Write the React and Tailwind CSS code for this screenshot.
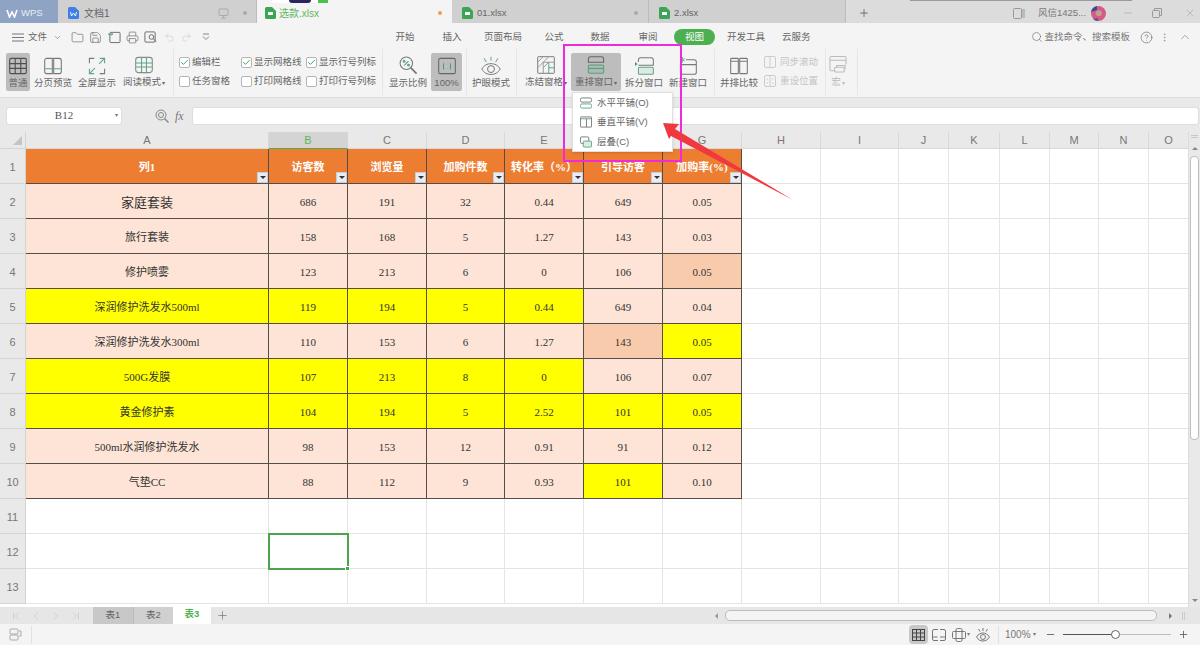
import React from "react";
import { Search, HelpCircle, ChevronUp, ChevronDown, MoreVertical, Plus, Minus, X, Undo2, Redo2, Folder, Save, Printer, ChevronLeft, ChevronRight, ChevronFirst, ChevronLast, Check } from "lucide-react";

const FONT = "font-['Liberation_Sans','Noto_Sans_CJK_SC',sans-serif]";
const CELL_FONT = "font-['Liberation_Serif','Noto_Sans_CJK_SC',serif]";

const colWidths = [243, 79, 79, 78, 79, 79, 79, 79, 78, 50, 51, 50, 49, 50, 40];
const colLabels = ["A", "B", "C", "D", "E", "F", "G", "H", "I", "J", "K", "L", "M", "N", "O"];

const headers = ["列1", "访客数", "浏览量", "加购件数", "转化率（%）", "引导访客", "加购率(%)"];
const rows = [
  { cells: ["家庭套装", "686", "191", "32", "0.44", "649", "0.05"] },
  { cells: ["旅行套装", "158", "168", "5", "1.27", "143", "0.03"] },
  { cells: ["修护喷雾", "123", "213", "6", "0", "106", "0.05"], dark: [6] },
  { cells: ["深润修护洗发水500ml", "119", "194", "5", "0.44", "649", "0.04"], yellow: [0, 1, 2, 3, 4] },
  { cells: ["深润修护洗发水300ml", "110", "153", "6", "1.27", "143", "0.05"], dark: [5], yellow: [6] },
  { cells: ["500G发膜", "107", "213", "8", "0", "106", "0.07"], yellow: [0, 1, 2, 3, 4] },
  { cells: ["黄金修护素", "104", "194", "5", "2.52", "101", "0.05"], yellow: [0, 1, 2, 3, 4, 5, 6] },
  { cells: ["500ml水润修护洗发水", "98", "153", "12", "0.91", "91", "0.12"] },
  { cells: ["气垫CC", "88", "112", "9", "0.93", "101", "0.10"], yellow: [5] },
];

const GridIcon = () => (
  <svg width="18" height="18" viewBox="0 0 26 26" fill="none" stroke="#4f4f4f" strokeWidth="1.6">
    <rect x="1" y="2" width="24" height="22" rx="2" />
    <path d="M1 9.500h24M1 16.500h24M9 2v22M17 2v22" />
  </svg>
);

const PageIcon = () => (
  <svg width="18" height="18" viewBox="0 0 26 26" fill="none" strokeWidth="1.5">
    <path d="M12 2H4a3 3 0 0 0-3 3v16a3 3 0 0 0 3 3h8V2zM14 2h8a3 3 0 0 1 3 3v16a3 3 0 0 1-3 3h-8V2z" stroke="#777" />
    <path d="M1 17h11M14 17h11" stroke="#5fa584" />
  </svg>
);

const FullIcon = () => (
  <svg width="18" height="18" viewBox="0 0 26 26" fill="none" strokeWidth="1.5">
    <path d="M2 9V2h7M24 17v7h-7" stroke="#777" />
    <path d="M17 2h7v7M24 2l-8 8M9 24H2v-7M2 24l8-8" stroke="#5fa584" />
  </svg>
);

const ReadIcon = () => (
  <svg width="18" height="18" viewBox="0 0 26 26" fill="none" strokeWidth="1.5" stroke="#5fa584">
    <rect x="1" y="2" width="24" height="22" rx="4" stroke="#888" />
    <path d="M1 10h24M1 16h24M9.500 2v22M16.500 2v22" />
  </svg>
);

const ZoomPctIcon = () => (
  <svg width="19" height="19" viewBox="0 0 26 26" fill="none" stroke="#777" strokeWidth="1.4">
    <circle cx="10" cy="10" r="8.500" />
    <path d="M16 16l8 8" strokeWidth="2.400" />
    <path d="M7 13l6-6" stroke="#4c9a76" />
    <circle cx="7" cy="7.500" r="1.200" stroke="#4c9a76" />
    <circle cx="13" cy="12.500" r="1.200" stroke="#4c9a76" />
  </svg>
);

const RatioIcon = () => (
  <svg width="18" height="18" viewBox="0 0 26 26" fill="none" stroke="#666" strokeWidth="1.5">
    <rect x="1" y="2" width="24" height="22" rx="2" />
    <path d="M8 9v9M13 10.500v.5M13 16v.5M18 9v9" stroke="#4c9a76" />
  </svg>
);

const EyeIcon = () => (
  <svg width="20" height="20" viewBox="0 0 26 26" fill="none" stroke="#777" strokeWidth="1.3">
    <path d="M1 17c3-5 7-7 12-7s9 2 12 7c-3 5-7 7-12 7s-9-2-12-7z" />
    <circle cx="13" cy="17" r="4.500" />
    <path d="M13 1v5M4 3l3 5M22 3l-3 5" stroke="#5fa584" />
  </svg>
);

const FreezeIcon = () => (
  <svg width="18" height="18" viewBox="0 0 26 26" fill="none" strokeWidth="1.4">
    <rect x="1" y="1" width="24" height="24" rx="1" stroke="#777" />
    <path d="M1 9l8-8M1 17L17 1M9 17l8-8M9 25V9h16" stroke="#999" />
    <path d="M17 9v16M17 17h8" stroke="#5fa584" />
  </svg>
);

const ArrangeIcon = () => (
  <svg width="18" height="18" viewBox="0 0 26 26" fill="none" strokeWidth="1.5">
    <path d="M2 9V4a3 3 0 0 1 3-3h16a3 3 0 0 1 3 3v5M1 9h24" stroke="#666" />
    <rect x="2" y="13" width="22" height="12" rx="2" stroke="#5c9a7d" fill="#a8bdb1" />
    <path d="M2 18h22" stroke="#5c9a7d" />
  </svg>
);

const SplitIcon = () => (
  <svg width="19" height="18" viewBox="0 0 28 26" fill="none" strokeWidth="1.500">
    <path d="M5 7V4a3 3 0 0 1 3-3h16a3 3 0 0 1 3 3v8H5" stroke="#777" />
    <rect x="5" y="15" width="22" height="10" rx="1.500" stroke="#5fa584" fill="#dcebe3" />
    <path d="M0 7l4 3-4 3z" fill="#4c9a76" />
  </svg>
);

const NewWinIcon = () => (
  <svg width="18" height="18" viewBox="0 0 26 26" fill="none" strokeWidth="1.500" stroke="#777">
    <path d="M10 4h12a3 3 0 0 1 3 3v15a3 3 0 0 1-3 3H5a3 3 0 0 1-3-3V11M2 11h23" />
    <path d="M5 0v8M1.500 2l7 4M8.500 2l-7 4" stroke="#5fa584" strokeWidth="1.200" />
  </svg>
);

const CompareIcon = () => (
  <svg width="18" height="18" viewBox="0 0 26 26" fill="none" strokeWidth="1.500" stroke="#777">
    <rect x="1" y="2" width="11" height="22" rx="1" />
    <rect x="14" y="2" width="11" height="22" rx="1" />
    <path d="M1 6h11M14 6h11" />
  </svg>
);

const MacroIcon = () => (
  <svg width="19" height="19" viewBox="0 0 20 20" fill="none" stroke="#bbb" strokeWidth="1.100">
    <path d="M18 10V3a1.500 1.500 0 0 0-1.500-1.500h-14A1.500 1.500 0 0 0 1 3v12a1.500 1.500 0 0 0 1.500 1.500H6M1 5.500h17" />
    <rect x="6" y="13" width="10" height="5" rx="1" />
    <path d="M8 13v-2h9v4" />
  </svg>
);

const RibbonBtn = ({ icon, label, active, caret, className = "" }) => (
  <div className={`flex flex-col items-center justify-between h-[38px] pb-[2px] rounded-[2px] ${active ? "bg-[#bdbdbd]" : ""} ${className}`}>
    <div className="flex items-center justify-center h-[24px] pt-[2px]">{icon}</div>
    <div className="text-[9.5px] leading-[12px] text-[#666] whitespace-nowrap">
      {label}
      {caret && <span className="text-[6px] ml-px align-middle">▾</span>}
    </div>
  </div>
);

const Divider = () => <div className="w-px h-[46px] bg-[#e6e6e6] shrink-0" />;

const CheckItem = ({ label, checked }) => (
  <div className="flex items-center gap-[2px] h-[19px]">
    <span className="flex items-center justify-center w-[11px] h-[11px] bg-white border border-[#b4b4b4] rounded-[2px]">
      {checked && <Check size={9} strokeWidth={2.5} className="text-[#3f9a6b]" />}
    </span>
    <span className="text-[9.5px] text-[#666] whitespace-nowrap">{label}</span>
  </div>
);

const SheetFileIcon = () => (
  <svg width="11" height="12" viewBox="0 0 11 12">
    <path d="M1.500 0H7l4 4v6.500a1.500 1.500 0 0 1-1.500 1.500h-8A1.500 1.500 0 0 1 0 10.500v-9A1.500 1.500 0 0 1 1.500 0z" fill="#3aa655" />
    <rect x="3" y="5" width="5" height="3" fill="#fff" />
  </svg>
);

const WordFileIcon = () => (
  <svg width="11" height="12" viewBox="0 0 11 12">
    <path d="M1.500 0H7l4 4v6.500a1.500 1.500 0 0 1-1.500 1.500h-8A1.500 1.500 0 0 1 0 10.500v-9A1.500 1.500 0 0 1 1.500 0z" fill="#3f7fe6" />
    <path d="M2.500 5l1 4 2-3 2 3 1-4" fill="none" stroke="#fff" strokeWidth="0.900" />
  </svg>
);

const Avatar = () => (
  <svg width="15" height="15" viewBox="0 0 15 15" className="ml-[5px]">
    <circle cx="7.500" cy="7.500" r="7.500" fill="#d9578b" />
    <path d="M0 6a7.500 7.500 0 0 1 6-6v4z" fill="#2f4f8f" />
    <path d="M2 13a7.500 7.500 0 0 0 5 2v-3z" fill="#4a5f7a" />
    <circle cx="7.800" cy="7.200" r="3" fill="#b8a58a" />
  </svg>
);

const TabBar = () => (
  <div className="relative flex h-[23px] bg-[#d4d4d4] text-[9.5px] text-[#555] shrink-0">
    <div className="flex items-center w-[58px] pl-[6px] pt-[3px] gap-[3px] bg-[#8fa3c4] text-white/80">
      <svg width="12" height="9" viewBox="0 0 12 9" fill="none" stroke="#fff" strokeWidth="1.600">
        <path d="M1 1l2.500 7L6 3l2.500 5L11 1" />
      </svg>
      <span className="text-[9.5px]">WPS</span>
    </div>
    <div className="flex items-center w-[199px] pl-[10px] pt-[3px] gap-[5px] bg-[#d0d0d0] border-r border-[#bcbcbc]">
      <WordFileIcon />
      <span className="flex-1 text-[#666] text-[10px]">文档1</span>
      <svg width="11" height="11" viewBox="0 0 11 11" fill="none" stroke="#aaa">
        <rect x="1" y="1" width="9" height="6.500" rx="1" />
        <path d="M5.500 7.500V10M3 10h5" />
      </svg>
      <span className="w-[4px] h-[4px] rounded-full bg-[#aaa] mx-[9px]" />
    </div>
    <div className="flex items-center w-[195px] pl-[8px] pt-[3px] gap-[3px] bg-[#f4f4f4]">
      <SheetFileIcon />
      <span className="flex-1 text-[#5cb85c] text-[10px]">选款.xlsx</span>
      <span className="w-[4px] h-[4px] rounded-full bg-[#e9a04f] mr-[10px]" />
    </div>
    <div className="flex items-center w-[197px] pl-[10px] pt-[3px] gap-[4px] bg-[#d0d0d0] border-r border-[#bcbcbc]">
      <SheetFileIcon />
      <span className="flex-1 text-[#666]">01.xlsx</span>
      <span className="w-[4px] h-[4px] rounded-full bg-[#aaa] mr-[10px]" />
    </div>
    <div className="flex items-center w-[197px] pl-[10px] pt-[3px] gap-[4px] bg-[#d0d0d0] border-r border-[#bcbcbc]">
      <SheetFileIcon />
      <span className="flex-1 text-[#666]">2.xlsx</span>
    </div>
    <div className="flex-1 flex items-center bg-[#dcdcdc] pl-[12px] pt-[3px]">
      <Plus size={12} strokeWidth={1.500} className="text-[#555]" />
      <svg width="12" height="11" viewBox="0 0 12 11" fill="none" stroke="#999" className="ml-[143px]">
        <rect x="0.500" y="0.500" width="8" height="10" rx="1" />
        <rect x="9" y="1" width="3" height="9" fill="#bbb" stroke="none" />
      </svg>
      <span className="ml-[13px] text-[9.5px] text-[#777] whitespace-nowrap">风信1425...</span>
      <Avatar />
      <Minus size={12} strokeWidth={1} className="ml-[16px] text-[#999]" />
      <svg width="10" height="10" viewBox="0 0 10 10" fill="none" stroke="#999" className="ml-[18px]">
        <rect x="0.500" y="2.500" width="7" height="7" rx="1" />
        <path d="M2.500 2.500v-2h7v7h-2" />
      </svg>
      <X size={12} strokeWidth={1} className="ml-[22px] text-[#999]" />
    </div>
    {/* stray picture strip at the top edge */}
    <div className="absolute left-[272px] top-0 w-[56px] h-[3px] bg-white flex justify-center">
      <span className="w-[22px] h-[3px] bg-[#2a2560] rounded-b-full" />
      <span className="absolute right-0 w-[10px] h-[3px] bg-[#49c24c]" />
    </div>
    <div className="absolute left-[910px] top-0 w-[222px] h-px bg-[#9a9a9a]" />
  </div>
);

const NavItem = ({ children, className = "" }) => (
  <span className={`w-[40px] text-center ${className}`}>{children}</span>
);

const MenuRow = () => (
  <div className="flex items-center h-[26px] pt-[2px] bg-[#f4f4f4] text-[9.5px] text-[#666] shrink-0 whitespace-nowrap">
    <svg width="12" height="9" viewBox="0 0 12 9" stroke="#777" className="ml-[12px]">
      <path d="M0 1h12M0 4.500h12M0 8h12" />
    </svg>
    <span className="ml-[4px] w-[19px]">文件</span>
    <ChevronDown size={9} className="ml-[6px] text-[#888]" />
    <Folder size={13} strokeWidth={1.200} className="ml-[9px] text-[#666]" />
    <Save size={13} strokeWidth={1.200} className="ml-[5px] text-[#666]" />
    <svg width="13" height="14" viewBox="0 0 14 14" fill="none" stroke="#666" className="ml-[6px]">
      <rect x="2" y="2" width="11" height="11" rx="1" />
      <path d="M0 4h5M3.500 2.500L5 4 3.500 5.500" stroke="#4c9a76" />
    </svg>
    <Printer size={13} strokeWidth={1.200} className="ml-[5px] text-[#666]" />
    <svg width="13" height="14" viewBox="0 0 14 14" fill="none" stroke="#666" className="ml-[5px]">
      <rect x="1" y="1.500" width="11" height="11" rx="1" />
      <circle cx="8" cy="7" r="2.500" />
      <path d="M10 9l3 3" />
    </svg>
    <Undo2 size={11} strokeWidth={1.200} className="ml-[7px] text-[#c4c4c4]" />
    <Redo2 size={11} strokeWidth={1.200} className="ml-[6px] text-[#c4c4c4]" />
    <svg width="8" height="8" viewBox="0 0 8 8" fill="none" stroke="#888" className="ml-[10px]">
      <path d="M1 1h6M1 3.500l3 3 3-3" />
    </svg>
    <NavItem className="ml-[175px]">开始</NavItem>
    <NavItem className="ml-[7px]">插入</NavItem>
    <NavItem className="ml-[11px]">页面布局</NavItem>
    <NavItem className="ml-[11px]">公式</NavItem>
    <NavItem className="ml-[6px]">数据</NavItem>
    <NavItem className="ml-[8px]">审阅</NavItem>
    <span className="ml-[6px] flex items-center justify-center w-[41px] h-[16px] rounded-full bg-[#4caf50] text-white">视图</span>
    <span className="ml-[12px]">开发工具</span>
    <span className="ml-[17px]">云服务</span>
    <Search size={12} strokeWidth={1.200} className="ml-[220px] text-[#666]" />
    <span className="ml-[2px] text-[#777]">查找命令、搜索模板</span>
    <HelpCircle size={13} strokeWidth={1.200} className="ml-[10px] text-[#666]" />
    <MoreVertical size={11} strokeWidth={1.200} className="ml-[6px] text-[#888]" />
    <ChevronUp size={14} strokeWidth={1} className="ml-[8px] text-[#777]" />
  </div>
);

const Ribbon = () => (
  <div className="flex items-center h-[49px] bg-[#f4f4f4] pl-[6px] pb-[3px] border-b border-[#dcdcdc] shrink-0">
    <RibbonBtn active icon={<GridIcon />} label="普通" className="w-[24px]" />
    <RibbonBtn icon={<PageIcon />} label="分页预览" className="w-[44px] ml-px" />
    <RibbonBtn icon={<FullIcon />} label="全屏显示" className="w-[44px]" />
    <RibbonBtn caret icon={<ReadIcon />} label="阅读模式" className="w-[50px] mr-[4px]" />
    <Divider />
    <div className="ml-[5px] w-[62px]">
      <CheckItem checked label="编辑栏" />
      <CheckItem label="任务窗格" />
    </div>
    <div className="w-[65px]">
      <CheckItem checked label="显示网格线" />
      <CheckItem label="打印网格线" />
    </div>
    <div className="w-[76px]">
      <CheckItem checked label="显示行号列标" />
      <CheckItem label="打印行号列标" />
    </div>
    <Divider />
    <RibbonBtn icon={<ZoomPctIcon />} label="显示比例" className="w-[44px] ml-[3px]" />
    <RibbonBtn active icon={<RatioIcon />} label="100%" className="w-[31px] ml-px mr-[4px]" />
    <Divider />
    <RibbonBtn icon={<EyeIcon />} label="护眼模式" className="w-[44px] ml-[2px] mr-[3px]" />
    <Divider />
    <RibbonBtn caret icon={<FreezeIcon />} label="冻结窗格" className="w-[48px] ml-[5px]" />
    <RibbonBtn active caret icon={<ArrangeIcon />} label="重排窗口" className="w-[50px] ml-px" />
    <RibbonBtn icon={<SplitIcon />} label="拆分窗口" className="w-[44px] ml-px" />
    <RibbonBtn icon={<NewWinIcon />} label="新建窗口" className="w-[44px] mr-[4px]" />
    <Divider />
    <RibbonBtn icon={<CompareIcon />} label="并排比较" className="w-[44px] ml-[2px]" />
    <div className="ml-[3px] w-[61px] text-[9.5px] text-[#c4c4c4] whitespace-nowrap">
      <div className="flex items-center gap-[4px] h-[19px]">
        <svg width="12" height="12" viewBox="0 0 12 12" fill="none" stroke="#ccc">
          <rect x="0.500" y="0.500" width="11" height="11" rx="1.500" />
          <path d="M6 0.500v11" />
        </svg>
        同步滚动
      </div>
      <div className="flex items-center gap-[4px] h-[19px]">
        <svg width="12" height="12" viewBox="0 0 12 12" fill="none" stroke="#ccc">
          <rect x="0.500" y="0.500" width="11" height="11" rx="1.500" />
          <path d="M6 0.500v11M2.500 4h1.500M8 4h1.500M2.500 8h1.500M8 8h1.500" />
        </svg>
        重设位置
      </div>
    </div>
    <Divider />
    <div className="flex flex-col items-center w-[24px] mr-[7px] h-[38px] pt-[2px] pb-[2px] justify-between text-[9.5px] leading-[12px] text-[#bbb]">
      <MacroIcon />
      <span>宏<span className="text-[6px] ml-px">▾</span></span>
    </div>
    <Divider />
  </div>
);

const FormulaBar = () => (
  <div className="flex items-center h-[34px] pt-px bg-[#e9e9e9] pl-[6px] pr-px shrink-0">
    <div className="relative flex items-center justify-center w-[116px] h-[18px] bg-white rounded-[3px] border border-[#dedede]">
      <span className={`text-[11px] text-[#555] ${CELL_FONT}`}>B12</span>
      <span className="absolute right-[3px] text-[6px] text-[#777]">▾</span>
    </div>
    <svg width="14" height="14" viewBox="0 0 14 14" fill="none" stroke="#888" className="ml-[33px]">
      <circle cx="6" cy="6" r="5" />
      <circle cx="6" cy="6" r="2.500" />
      <path d="M9.500 9.500l4 4" strokeWidth="1.500" />
    </svg>
    <span className="ml-[6px] w-[11px] text-[12px] italic text-[#777] font-['Liberation_Serif',serif]">fx</span>
    <div className="ml-[6px] flex-1 h-[18px] bg-white rounded-[3px] border border-[#dedede]" />
  </div>
);

const RowLabel = ({ children }) => (
  <div className="flex items-center justify-center pt-[3px] bg-[#e9e9e9] border-r border-b border-[#d4d4d4] text-[11px] text-[#777]">
    {children}
  </div>
);

const DataRow = ({ index, row }) => (
  <>
    <RowLabel>{index}</RowLabel>
    {colWidths.map((_, c) => {
      if (c > 6 || !row) {
        return <div key={c} className="border-r border-b border-[#e4e4e4]" />;
      }
      const isYellow = row.yellow?.includes(c);
      const isDark = row.dark?.includes(c);
      return (
        <div
          key={c}
          className={`flex items-center justify-center pt-[3px] border-r border-b border-[#544d48] text-[#333] whitespace-nowrap ${CELL_FONT} ${
            index === 2 && c === 0 ? "text-[13px]" : "text-[11px]"
          } ${isYellow ? "bg-[#ffff00]" : isDark ? "bg-[#f8cbad]" : "bg-[#fde4d6]"}`}
        >
          {row.cells[c]}
        </div>
      );
    })}
  </>
);

const Sheet = () => (
  <div className="relative flex-1 overflow-hidden bg-white">
    <div
      className="grid [grid-auto-rows:35px] grid-rows-[17px]"
      style={{ gridTemplateColumns: `26px ${colWidths.map((w) => `${w}px`).join(" ")}` }}
    >
      <div className="relative bg-[#e9e9e9] border-r border-b border-[#d4d4d4]">
        <span className="absolute right-[3px] bottom-[3px] w-0 h-0 border-l-[9px] border-l-transparent border-b-[9px] border-b-[#c4c4c4]" />
      </div>
      {colLabels.map((l, i) => (
        <div
          key={l}
          className={`flex items-center justify-center pt-px border-r border-b text-[11px] ${
            i === 1 ? "bg-[#d4d4d4] text-[#5cb85c] border-[#d4d4d4] border-b-[#4caf50]" : "bg-[#e9e9e9] text-[#777] border-[#d8d8d8]"
          }`}
        >
          {l}
        </div>
      ))}

      <RowLabel>1</RowLabel>
      {colWidths.map((_, c) =>
        c > 6 ? (
          <div key={c} className="border-r border-b border-[#e4e4e4]" />
        ) : (
          <div
            key={c}
            className={`relative flex items-center justify-center pt-[3px] bg-[#ed7d31] border-r border-b border-[#544d48] text-white text-[11px] font-bold whitespace-nowrap ${CELL_FONT}`}
          >
            {headers[c]}
            <span className="absolute right-0 bottom-0 flex items-center justify-center w-[11px] h-[11px] bg-[#e9edf3] border border-[#c9ced6]">
              <span className="w-0 h-0 border-x-[3px] border-x-transparent border-t-[3px] border-t-[#333]" />
            </span>
          </div>
        )
      )}

      {rows.map((row, i) => (
        <DataRow key={i} index={i + 2} row={row} />
      ))}
      <DataRow index={11} />
      <DataRow index={12} />
      <DataRow index={13} />
    </div>

    {/* selected cell B12 */}
    <div className="absolute left-[268px] top-[401px] w-[81px] h-[37px] border-2 border-[#4aa64a]">
      <span className="absolute -right-[3px] -bottom-[3px] w-[5px] h-[5px] bg-[#4aa64a] border border-white" />
    </div>

    {/* vertical scrollbar */}
    <div className="absolute right-0 top-0 bottom-0 w-[12px] bg-[#e9e9e9] flex flex-col items-center border-l border-[#dcdcdc]">
      <span className="mt-[3px] w-[7px] h-[3px] border-y border-[#c8c8c8]" />
      <span className="mt-[9px] w-0 h-0 border-x-[3px] border-x-transparent border-b-[3px] border-b-[#888]" />
      <div className="mt-[6px] w-[9px] h-[284px] bg-white border border-[#bdbdbd] rounded-[4px]" />
      <span className="mt-auto mb-[5px] w-0 h-0 border-x-[3px] border-x-transparent border-t-[3px] border-t-[#888]" />
    </div>
  </div>
);

const SheetTabs = () => (
  <div className="flex items-center h-[17px] bg-[#e6e6e6] shrink-0 text-[9.5px] text-[#666]">
    <div className="flex items-center w-[93px] pl-[10px] gap-[8px] text-[#bbb]">
      <ChevronFirst size={12} strokeWidth={1} />
      <ChevronLeft size={12} strokeWidth={1} />
      <ChevronRight size={12} strokeWidth={1} />
      <ChevronLast size={12} strokeWidth={1} />
    </div>
    <span className="flex items-center justify-center w-[41px] h-full bg-[#c8c8c8] border-r border-[#bbb]">表1</span>
    <span className="flex items-center justify-center w-[39px] h-full bg-[#d0d0d0]">表2</span>
    <span className="flex items-center justify-center w-[38px] h-[19px] -mt-[2px] bg-white font-bold text-[#4caf50]">表3</span>
    <Plus size={13} strokeWidth={1} className="ml-[5px] text-[#555]" />
    <span className="ml-[486px] w-0 h-0 border-y-[3px] border-y-transparent border-r-[3px] border-r-[#999]" />
    <div className="ml-[7px] w-[432px] h-[11px] bg-[#f4f4f4] border border-[#bdbdbd] rounded-[5px]" />
    <span className="ml-[12px] w-0 h-0 border-y-[3px] border-y-transparent border-l-[3px] border-l-[#777]" />
    <span className="ml-[10px] w-[3px] h-[8px] border-x border-[#ccc]" />
  </div>
);

const StatusBar = () => (
  <div className="flex items-center h-[21px] bg-[#f4f4f4] shrink-0 text-[10px] text-[#777]">
    <svg width="13" height="13" viewBox="0 0 13 13" fill="none" stroke="#aaa" className="ml-[9px]">
      <rect x="1" y="1" width="8" height="5" rx="1" />
      <rect x="1" y="7" width="8" height="5" rx="1" />
      <path d="M10 3h2v5h-2" />
    </svg>
    <span className="ml-[9px] w-px h-[18px] bg-[#e2e2e2]" />
    <div className="ml-[877px] flex items-center justify-center w-[19px] h-[19px] bg-[#c8c8c8] rounded-sm">
      <svg width="13" height="12" viewBox="0 0 13 12" fill="none" stroke="#444">
        <rect x="0.500" y="0.500" width="12" height="11" />
        <path d="M0.500 4h12M0.500 8h12M4.500 0.500v11M8.500 0.500v11" />
      </svg>
    </div>
    <svg width="14" height="12" viewBox="0 0 14 12" fill="none" stroke="#777" className="ml-[4px]">
      <path d="M6 0.500H2a1.500 1.500 0 0 0-1.500 1.500v8A1.500 1.500 0 0 0 2 11.500h4M8 0.500h4A1.500 1.500 0 0 1 13.500 2v8a1.500 1.500 0 0 1-1.500 1.500H8M0.500 8h5M8 8h5.500" />
    </svg>
    <svg width="14" height="14" viewBox="0 0 14 14" fill="none" stroke="#777" className="ml-[6px]">
      <rect x="4" y="0.500" width="6" height="13" rx="1.500" />
      <rect x="0.500" y="3.500" width="13" height="7" rx="1" />
    </svg>
    <span className="ml-px w-[5px] text-[6px]">▾</span>
    <svg width="14" height="14" viewBox="0 0 14 14" fill="none" stroke="#777" className="ml-[4px]">
      <path d="M0.500 9c2-3 4-4 6.500-4s4.500 1 6.500 4c-2 3-4 4-6.500 4s-4.500-1-6.500-4z" />
      <circle cx="7" cy="9" r="2.500" />
      <path d="M7 0v3M2.500 1l1.500 2.500M11.500 1L10 3.500" />
    </svg>
    <span className="ml-[8px] w-px h-[18px] bg-[#e2e2e2]" />
    <span className="ml-[6px] w-[26px]">100%</span>
    <span className="ml-[2px] w-[5px] text-[6px]">▾</span>
    <Minus size={11} strokeWidth={2} className="ml-[7px] text-[#666]" />
    <div className="relative ml-[7px] w-[108px] h-px bg-[#bbb]">
      <div className="w-[49px] h-px bg-[#555]" />
      <span className="absolute left-[48px] -top-[4px] w-[9px] h-[9px] rounded-full bg-white border border-[#666]" />
    </div>
    <Plus size={11} strokeWidth={2} className="ml-[7px] text-[#666]" />
  </div>
);

const MenuItem = ({ icon, label }) => (
  <div className="flex items-center h-[19.5px] pl-[7px] gap-[5px] text-[9.5px] text-[#666]">
    {icon}
    <span>{label}</span>
  </div>
);

const ArrangeMenu = () => (
  <div className="absolute left-[572px] top-[92px] w-[101px] h-[60px] bg-white border border-[#e0e0e0] shadow-sm">
    <MenuItem
      label="水平平铺(O)"
      icon={
        <svg width="12" height="12" viewBox="0 0 13 12" fill="none" stroke="#777">
          <rect x="0.500" y="0.500" width="12" height="4.500" rx="1.500" />
          <rect x="0.500" y="7" width="12" height="4.500" rx="1.500" stroke="#5fa584" />
        </svg>
      }
    />
    <MenuItem
      label="垂直平铺(V)"
      icon={
        <svg width="12" height="12" viewBox="0 0 13 12" fill="none" stroke="#777">
          <rect x="0.500" y="0.500" width="12" height="11" rx="0.500" />
          <path d="M7 2.500v9" />
          <path d="M0.500 2.500h12" stroke="#5fa584" />
        </svg>
      }
    />
    <MenuItem
      label="层叠(C)"
      icon={
        <svg width="12" height="12" viewBox="0 0 13 12" fill="none" stroke="#777">
          <rect x="0.500" y="0.500" width="9" height="7" rx="1" />
          <rect x="3.500" y="5" width="9" height="6.500" rx="1" stroke="#5fa584" fill="#dcebe3" />
        </svg>
      }
    />
  </div>
);

export default function App() {
  return (
    <div className={`relative flex flex-col w-[1200px] h-[645px] overflow-hidden bg-white ${FONT}`}>
      <TabBar />
      <MenuRow />
      <Ribbon />
      <FormulaBar />
      <Sheet />
      <SheetTabs />
      <StatusBar />

      <ArrangeMenu />

      {/* annotations drawn over the screenshot */}
      <div className="absolute left-[563px] top-[44px] w-[119px] h-[118px] border-2 border-[#f02ad8]" />
      <svg width="180" height="110" viewBox="0 0 180 110" className="absolute left-[630px] top-[110px]">
        <path d="M33 13L49 14L45 19L163 90L41 26L39 29z" fill="#f0383f" />
      </svg>
    </div>
  );
}
